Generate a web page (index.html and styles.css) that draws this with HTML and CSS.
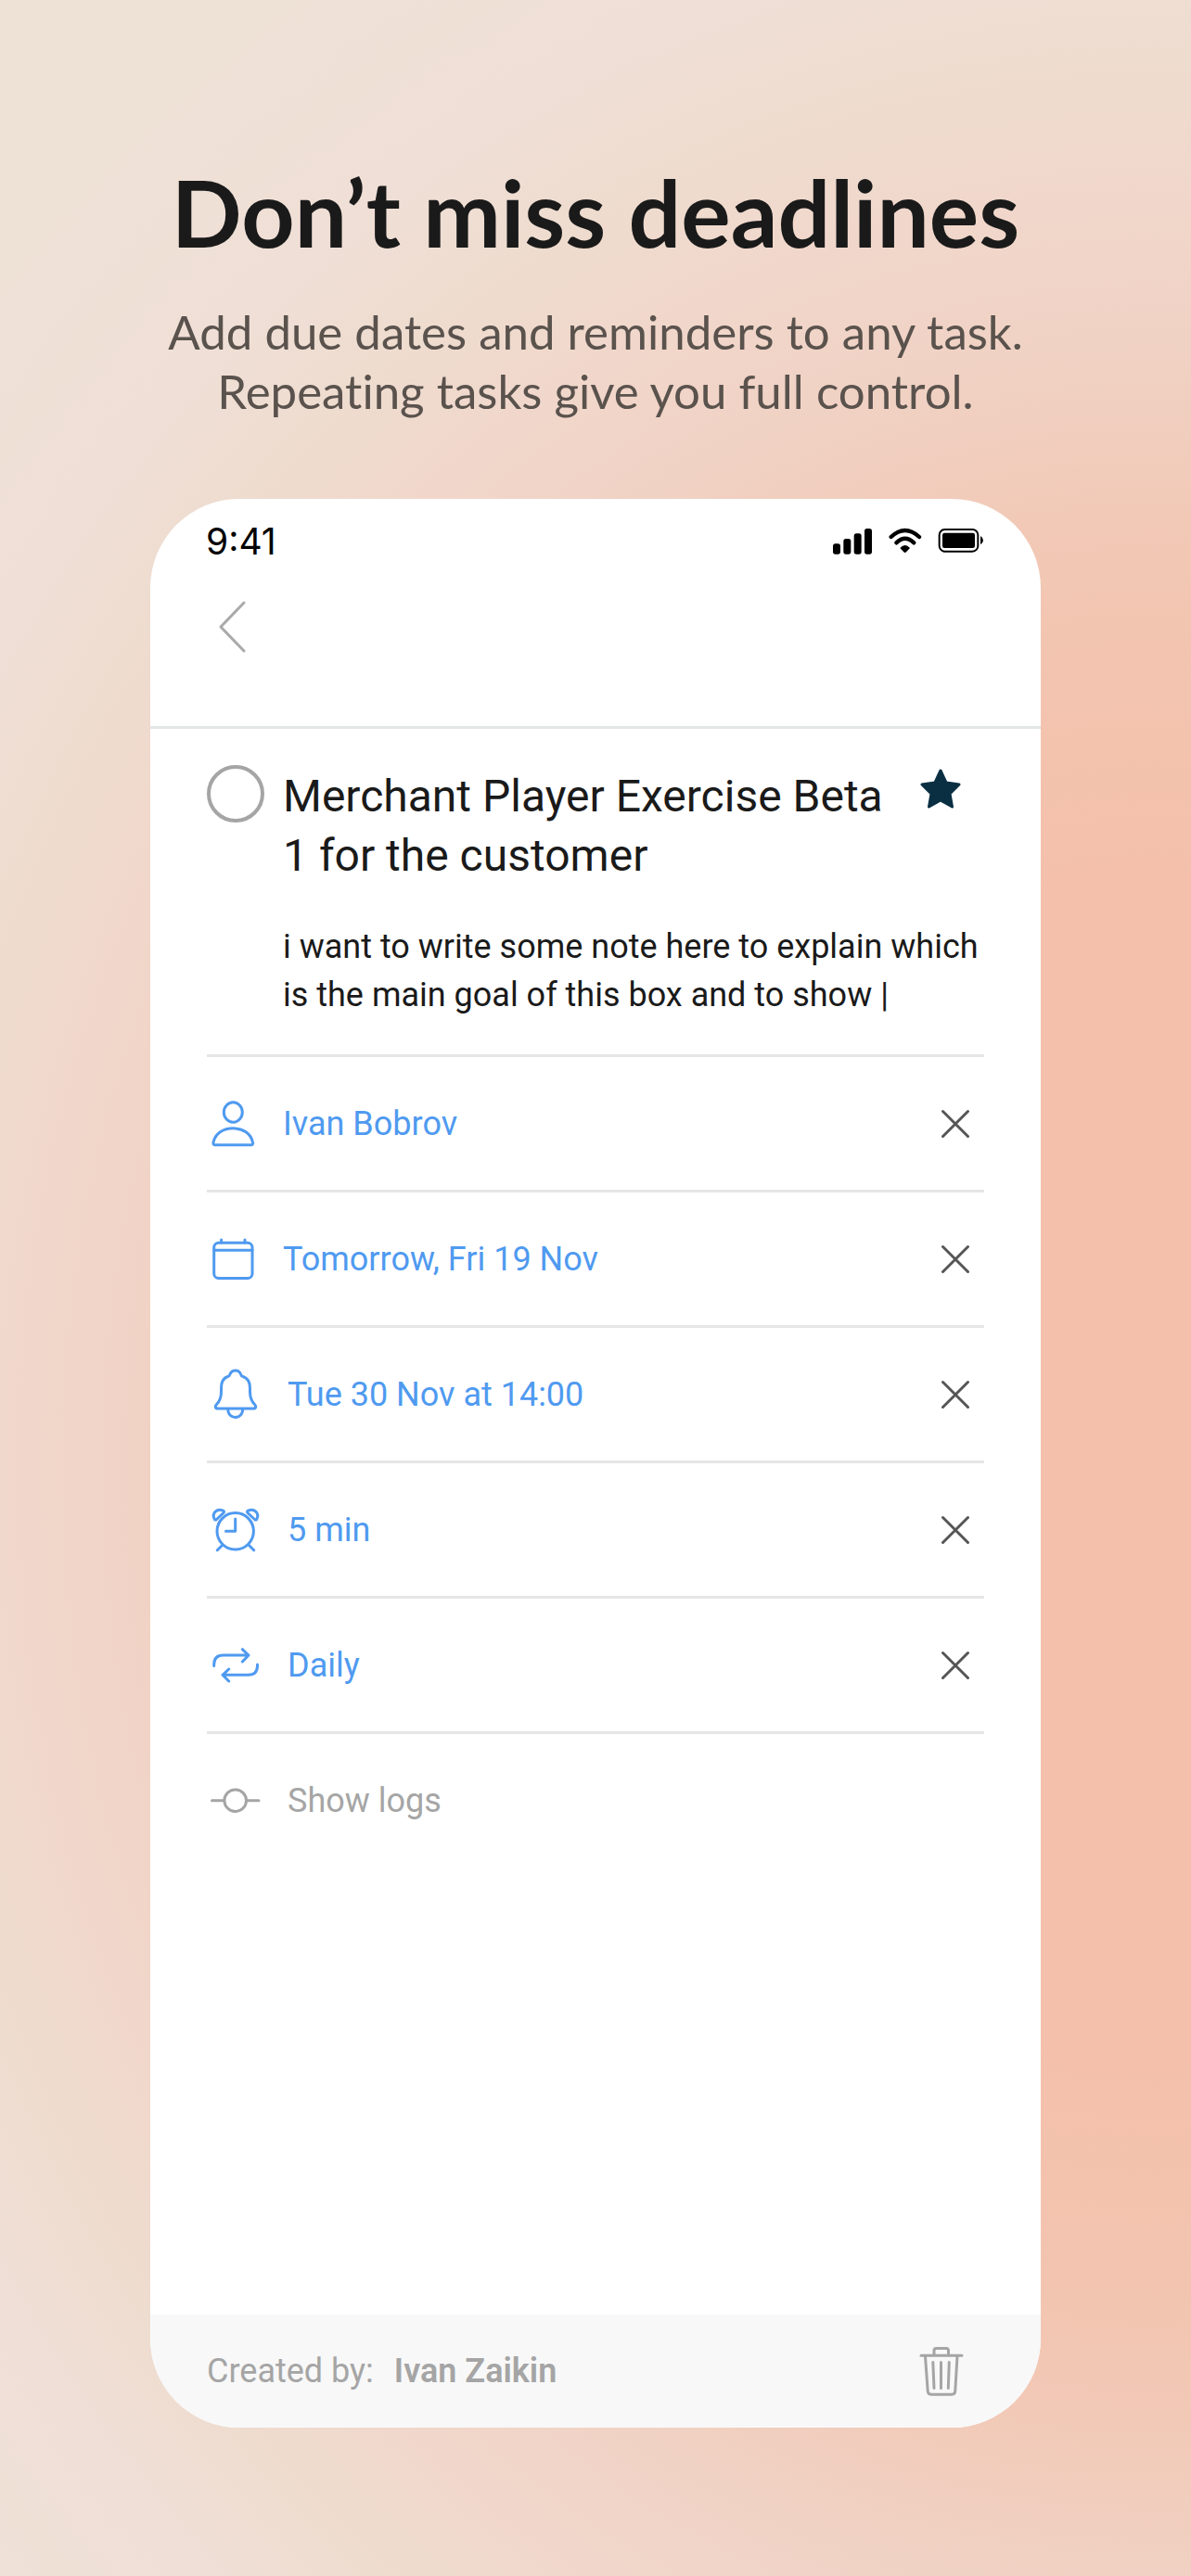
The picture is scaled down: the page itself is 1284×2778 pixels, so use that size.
FILE: index.html
```html
<!DOCTYPE html>
<html lang="en">
<head>
    <meta charset="UTF-8">
    <meta name="viewport" content="width=device-width, initial-scale=1.0">
    <title>Don’t miss deadlines</title>
    <link rel="stylesheet" href="styles.css">
</head>
<body>
    <header class="intro">
        <h1>Don’t miss deadlines</h1>
        <p>Add due dates and reminders to any task.<br>Repeating tasks give you full control.</p>
    </header>

    <main class="phone">
        <div class="status-bar">
            <span class="time">9:41</span>
            <svg class="status-icons" viewBox="114 87 486 87" aria-hidden="true">
                <rect x="114" y="139" width="24" height="34" rx="8"/>
                <rect x="148" y="123" width="24" height="50" rx="8"/>
                <rect x="182" y="106" width="24" height="67" rx="8"/>
                <rect x="216" y="90" width="24" height="83" rx="8"/>
                <g class="wifi">
                    <path d="M302 117Q347 75 393 117"/>
                    <path d="M319 136Q347 109 376 136"/>
                </g>
                <path d="M331 153Q347 135 363 153L351 166Q347 170 343 166Z"/>
                <rect class="battery" x="458" y="93" width="125" height="71" rx="18"/>
                <rect x="468" y="104" width="105" height="49" rx="7"/>
                <path d="M591 114Q600 120 600 128T591 142Z"/>
            </svg>
        </div>

        <nav class="nav-bar">
            <button class="back" aria-label="Back">
                <svg viewBox="0 0 36 60"><path d="M31 4L6 30L31 56"/></svg>
            </button>
        </nav>

        <section class="task">
            <input type="checkbox" class="done" id="done" aria-label="Mark as done">
            <label class="title" for="done">Merchant Player Exercise Beta 1 for the customer</label>
            <button class="star" aria-label="Starred">
                <svg viewBox="0 0 44 44"><path d="M22 2L28 15L42 17L32 27L34.500 41L22 34L9.500 41L12 27L2 17L16 15Z"/></svg>
            </button>
            <textarea class="note" rows="2" aria-label="Note" spellcheck="false">i want to write some note here to explain which is the main goal of this box and to show |</textarea>
        </section>

        <ul class="details">
            <li>
                <svg class="icon" viewBox="0 0 60 56">
                    <ellipse cx="28.300" cy="15.500" rx="10" ry="10.700"/>
                    <path d="M9 50.700H47.500Q50 50.700 49.500 48C47.500 38.500 39 32.800 28.300 32.800S9 38.500 7 48Q6.500 50.700 9 50.700Z"/>
                </svg>
                <button class="value">Ivan Bobrov</button>
                <button class="remove" aria-label="Remove assignee"><svg viewBox="0 0 32 32"><path d="M2.500 2.500L29.500 29.500M29.500 2.500L2.500 29.500"/></svg></button>
            </li>
            <li>
                <svg class="icon" viewBox="0 0 60 56">
                    <rect x="7.700" y="10.300" width="41.300" height="38.200" rx="5"/>
                    <path d="M8 18.300H49M15.600 7V10M41 7V10"/>
                </svg>
                <button class="value">Tomorrow, Fri 19 Nov</button>
                <button class="remove" aria-label="Remove due date"><svg viewBox="0 0 32 32"><path d="M2.500 2.500L29.500 29.500M29.500 2.500L2.500 29.500"/></svg></button>
            </li>
            <li class="wide">
                <svg class="icon" viewBox="0 0 60 56">
                    <path d="M12 43H50C53 43 53.500 40.500 51.500 38.500C48 35 46.500 31 46.500 25V21C46.500 14.500 43.500 10 39 8.500Q37 8 36.500 6C34.500 .5 27 .5 25 6Q24.500 8 22.500 8.500C18 10 15.500 14.500 15.500 21V25C15.500 31 14 35 10.500 38.500C8.500 40.500 9 43 12 43Z"/>
                    <path d="M22.700 43.500C22.700 55.500 38.700 55.500 38.700 43.500"/>
                </svg>
                <button class="value">Tue 30 Nov at 14:00</button>
                <button class="remove" aria-label="Remove reminder"><svg viewBox="0 0 32 32"><path d="M2.500 2.500L29.500 29.500M29.500 2.500L2.500 29.500"/></svg></button>
            </li>
            <li class="wide">
                <svg class="icon" viewBox="0 0 60 56">
                    <circle cx="30.700" cy="29.300" r="19.700"/>
                    <path d="M30.700 16V29.300H20.500M17 44L11.300 49.700M45 44L50.700 49.700"/>
                    <path d="M10.500 16.500L18 9.500Q19.200 8 17.500 7.200C11 4 5 10 8.200 16.200Q9 17.700 10.500 16.500Z"/>
                    <path d="M51.500 16.500L44 9.500Q42.800 8 44.500 7.200C51 4 57 10 53.800 16.200Q53 17.700 51.500 16.500Z"/>
                </svg>
                <button class="value">5 min</button>
                <button class="remove" aria-label="Remove duration"><svg viewBox="0 0 32 32"><path d="M2.500 2.500L29.500 29.500M29.500 2.500L2.500 29.500"/></svg></button>
            </li>
            <li class="wide">
                <svg class="icon" viewBox="0 0 60 56">
                    <path d="M7.700 28.500V27Q7.700 17 17.700 17H45M38.300 10.700L45 17L38.300 24"/>
                    <path d="M54.500 27V28.300Q54.500 38.300 44.500 38.300H17M23.700 32L17 38.300L23.700 45"/>
                </svg>
                <button class="value">Daily</button>
                <button class="remove" aria-label="Remove repeat"><svg viewBox="0 0 32 32"><path d="M2.500 2.500L29.500 29.500M29.500 2.500L2.500 29.500"/></svg></button>
            </li>
            <li class="wide logs">
                <svg class="icon" viewBox="0 0 60 56">
                    <circle cx="30.700" cy="27.700" r="11.800"/>
                    <path d="M5.500 27.700H18.500M43 27.700H56"/>
                </svg>
                <button class="value">Show logs</button>
            </li>
        </ul>

        <footer class="footer">
            <span>Created by:</span>
            <strong>Ivan Zaikin</strong>
            <button class="delete" aria-label="Delete task">
                <svg viewBox="0 0 56 56">
                    <path d="M6 11.300H50M20 11V6Q20 3.500 22.500 3.500H33Q35.500 3.500 35.500 6V11"/>
                    <path d="M10.500 12L13.200 49.500Q13.500 53.300 17 53.300H39Q42.500 53.300 42.800 49.500L45 12"/>
                    <path d="M18.800 18.500L20 46.500M27.500 18.500V46.500M36.300 18.500L35.300 46.500"/>
                </svg>
            </button>
        </footer>
    </main>
</body>
</html>
```
FILE: styles.css
```css
* {
    margin: 0;
    padding: 0;
    box-sizing: border-box;
}

body {
    display: flex;
    flex-direction: column;
    align-items: center;
    min-height: 100vh;
    padding: 172px 0 160px;
    font-family: Roboto, "Liberation Sans", sans-serif;
    color: #1a1a1a;
    background: radial-gradient(ellipse 125% 65% at 97% 57%,
        #f4c0ab 0%, #f4c0ab 35%, #f2c5b0 50%, #f2c9b7 57%, #f0d2c4 67%,
        #f1d7cb 76%, #eedccf 84%, #f0dfd6 92%, #eee1d6 105%);
}

button {
    display: flex;
    border: none;
    background: none;
    font: inherit;
    color: inherit;
    cursor: pointer;
}

svg {
    fill: none;
    stroke: currentColor;
    stroke-width: 3;
    stroke-linecap: round;
    stroke-linejoin: round;
}

.intro {
    font-family: Lato, "Open Sans", sans-serif;
    font-variant-ligatures: none;
    text-align: center;
}

.intro h1 {
    font-size: 100px;
    line-height: 112px;
    font-weight: 700;
}

.intro p {
    margin: 42px 0 84px;
    font-size: 51px;
    line-height: 64px;
    color: #5a524d;
}

/* Phone card */
.phone {
    display: flex;
    flex-direction: column;
    flex: 1;
    width: 80%;
    max-width: 960px;
    border-radius: 96px;
    background: #fff;
    overflow: hidden;
}

.status-bar {
    display: flex;
    align-items: center;
    justify-content: space-between;
    height: 90px;
    padding: 0 62px 0 60px;
    color: #000;
}

.time {
    font-family: Inter, sans-serif;
    font-size: 39px;
}

.status-icons {
    width: 162px;
    height: 29px;
    fill: #000;
    stroke: none;
}

.wifi {
    fill: none;
    stroke: #000;
    stroke-width: 13;
}

.battery {
    fill: none;
    stroke: #000;
    stroke-width: 6;
}

.nav-bar {
    height: 158px;
    padding: 18px 70px;
    border-bottom: 3px solid #e3e8e6;
}

.back svg {
    width: 36px;
    height: 60px;
    color: #aaa;
}

.task {
    display: grid;
    grid-template-columns: 62px 1fr 96px;
    padding: 39px 60px 38px 61px;
}

.done {
    appearance: none;
    width: 62px;
    height: 62px;
    border: 4px solid #a5a5a5;
    border-radius: 50%;
}

.title {
    padding: 2px 0 0 20px;
    font-size: 48px;
    line-height: 64px;
}

.star {
    align-self: start;
    justify-content: center;
    padding-top: 4px;
}

.star svg {
    width: 44px;
    height: 44px;
    color: #0a2f42;
    fill: currentColor;
}

.note {
    grid-column: 2 / 4;
    margin: 40px 0 0 20px;
    border: none;
    outline: none;
    resize: none;
    overflow: hidden;
    background: none;
    font: inherit;
    font-size: 36px;
    line-height: 52px;
    color: inherit;
}

.details {
    margin: 0 61px;
    list-style: none;
    color: #4f9af0;
}

.details li {
    display: flex;
    align-items: center;
    gap: 22px;
    height: 146px;
    border-top: 3px solid #e6e6e6;
}

.details .wide {
    gap: 27px;
}

.details .logs {
    color: #a5a5a5;
}

.icon {
    width: 60px;
    height: 56px;
}

.value {
    flex: 1;
    font-size: 36px;
}

.remove {
    justify-content: center;
    width: 62px;
    color: #555;
}

.remove svg {
    width: 32px;
    height: 32px;
}

.footer {
    display: flex;
    align-items: center;
    gap: 22px;
    height: 122px;
    margin-top: auto;
    padding: 0 79px 0 61px;
    background: #f8f8f8;
    font-size: 36px;
    color: #a5a5a5;
}

.footer strong {
    font-weight: 600;
}

.delete {
    margin-left: auto;
}

.delete svg {
    width: 56px;
    height: 56px;
}
```
